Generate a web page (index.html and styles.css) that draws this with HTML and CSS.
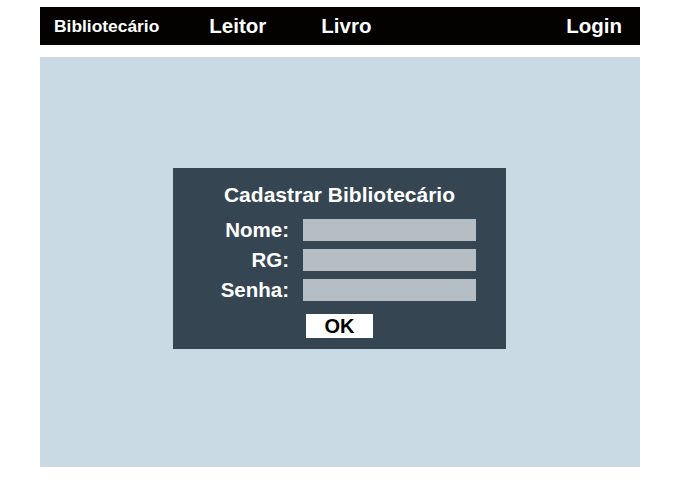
FILE: index.html
```html
<!DOCTYPE html>
<html lang="pt">
<head>
<meta charset="utf-8">
<title>Cadastrar Bibliotecário</title>
<link rel="stylesheet" href="styles.css">
</head>
<body>
<nav class="topbar">
  <a class="nav-item nav-small" href="#">Bibliotecário</a>
  <a class="nav-item nav-leitor" href="#">Leitor</a>
  <a class="nav-item nav-livro" href="#">Livro</a>
  <a class="nav-item nav-login" href="#">Login</a>
</nav>
<main class="content">
  <form class="panel">
    <h1 class="panel-title">Cadastrar Bibliotecário</h1>
    <div class="fields">
      <label class="field-label" for="nome">Nome:</label>
      <input class="field-input" id="nome" type="text">
      <label class="field-label" for="rg">RG:</label>
      <input class="field-input" id="rg" type="text">
      <label class="field-label" for="senha">Senha:</label>
      <input class="field-input" id="senha" type="password">
    </div>
    <button class="ok-button" type="button">OK</button>
  </form>
</main>
</body>
</html>
```
FILE: styles.css
```css
* { box-sizing: border-box; }

body {
  margin: 7px 0 0 40px;
  width: 600px;
  font-family: "Liberation Sans", Arial, sans-serif;
  font-weight: bold;
  background: #ffffff;
}

.topbar {
  display: flex;
  align-items: center;
  height: 38px;
  background: #030201;
  padding: 0 18px 0 14px;
}

.nav-item {
  color: #ffffff;
  text-decoration: none;
  font-size: 20.5px;
  line-height: 24px;
}

.nav-small { font-size: 17.4px; }
.nav-leitor { margin-left: 50px; }
.nav-livro { margin-left: 55px; }
.nav-login { margin-left: auto; }

.content {
  margin-top: 12px;
  height: 410px;
  background: #c9dae5;
  display: flex;
  flex-direction: column;
  align-items: flex-start;
  padding: 111px 0 0 133px;
}

.panel {
  width: 333px;
  height: 181px;
  background: #364552;
  display: flex;
  flex-direction: column;
  align-items: center;
  padding-top: 15px;
}

.panel-title {
  margin: 0;
  color: #ffffff;
  font-size: 21px;
  line-height: 24px;
  font-weight: bold;
}

.fields {
  align-self: flex-start;
  margin: 12px 0 0 46px;
  display: grid;
  grid-template-columns: 70px 173px;
  column-gap: 14px;
  row-gap: 8px;
  align-items: center;
}

.field-label {
  color: #ffffff;
  font-size: 20.5px;
  line-height: 22px;
  text-align: right;
  white-space: nowrap;
}

.field-input {
  width: 173px;
  height: 22px;
  border: 0;
  margin: 0;
  padding: 0 4px;
  background: #b5bdc5;
  outline: none;
}

.ok-button {
  margin-top: 13px;
  width: 67px;
  height: 24px;
  border: 0;
  padding: 0;
  background: #ffffff;
  color: #000000;
  font-family: "Liberation Sans", Arial, sans-serif;
  font-weight: bold;
  font-size: 20px;
  line-height: 24px;
}
```
